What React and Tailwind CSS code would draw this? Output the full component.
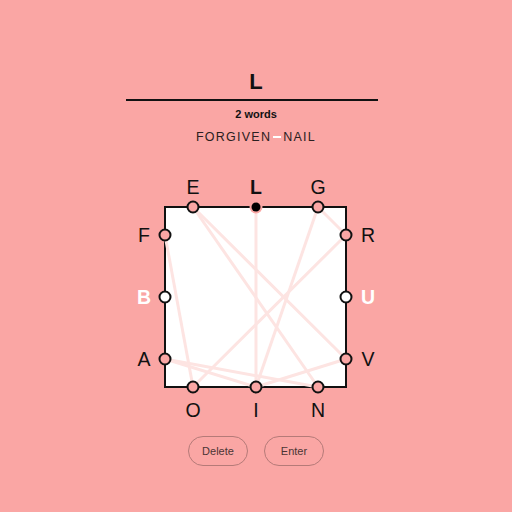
const BOX = { l: 39, r: 220, t: 37, b: 217 };

const letters = {
  E: { x: 67, y: 37, side: "top" },
  L: { x: 130, y: 37, side: "top" },
  G: { x: 192, y: 37, side: "top" },
  R: { x: 220, y: 65, side: "right" },
  U: { x: 220, y: 127, side: "right" },
  V: { x: 220, y: 189, side: "right" },
  O: { x: 67, y: 217, side: "bottom" },
  I: { x: 130, y: 217, side: "bottom" },
  N: { x: 192, y: 217, side: "bottom" },
  F: { x: 39, y: 65, side: "left" },
  B: { x: 39, y: 127, side: "left" },
  A: { x: 39, y: 189, side: "left" },
};

const path = ["F", "O", "R", "G", "I", "V", "E", "N", "A", "I", "L"];
const unused = ["B", "U"];
const current = "L";

function labelPos({ x, y, side }) {
  if (side === "top") return { x, y: y - 13 };
  if (side === "bottom") return { x, y: y + 30 };
  if (side === "left") return { x: x - 21, y: y + 7 };
  return { x: x + 22, y: y + 7 };
}

function Board() {
  return (
    <svg width="260" height="260" viewBox="0 0 260 260" className="block">
      <rect x={BOX.l} y={BOX.t} width={BOX.r - BOX.l} height={BOX.b - BOX.t} fill="#ffffff" stroke="#111" strokeWidth="2" />
      {path.slice(1).map((k, i) => {
        const a = letters[path[i]];
        const b = letters[k];
        return <line key={i} x1={a.x} y1={a.y} x2={b.x} y2={b.y} stroke="#fde4e2" strokeWidth="3" />;
      })}
      {Object.entries(letters).map(([k, p]) => {
        const lp = labelPos(p);
        const isUnused = unused.includes(k);
        const isCur = k === current;
        return (
          <g key={k}>
            {isCur ? (
              <>
                <circle cx={p.x} cy={p.y} r="6.5" fill="#faa6a4" />
                <circle cx={p.x} cy={p.y} r="4.5" fill="#000" />
              </>
            ) : (
              <circle cx={p.x} cy={p.y} r="5.5" fill={isUnused ? "#ffffff" : "#faa6a4"} stroke="#111" strokeWidth="2" />
            )}
            <text
              x={lp.x}
              y={lp.y}
              textAnchor="middle"
              fontSize="19.5"
              fontWeight={isUnused || isCur ? 700 : 400}
              fill={isUnused ? "#ffffff" : "#111"}
              fontFamily="'Liberation Sans', Arial, sans-serif"
            >
              {k}
            </text>
          </g>
        );
      })}
    </svg>
  );
}

export default function App() {
  return (
    <div className="flex min-h-[512px] w-full flex-col items-center bg-[#faa6a4] font-['Liberation_Sans',Arial,sans-serif] text-[#111]">
      <div className="mt-[70px] text-[22px] font-bold leading-[24px]">L</div>
      <div className="mt-[5px] mr-[8px] h-[2px] w-[252px] bg-[#111]" />
      <div className="mt-[6px] text-[11px] font-bold leading-[14px]">2 words</div>
      <div className="mt-[8px] flex items-center text-[12.5px] leading-[16px] tracking-[0.1em] text-[#2a2020]">
        <span>FORGIVEN</span>
        <span className="mx-[2px] inline-block h-[1.5px] w-[8px] bg-white" />
        <span>NAIL</span>
      </div>
      <div className="mt-[25px]">
        <Board />
      </div>
      <div className="mt-[6px] flex gap-4">
        <button className="h-[30px] w-[60px] rounded-full border border-[#b57a78] text-[11px] text-[#4a3535]">Delete</button>
        <button className="h-[30px] w-[60px] rounded-full border border-[#b57a78] text-[11px] text-[#4a3535]">Enter</button>
      </div>
    </div>
  );
}
